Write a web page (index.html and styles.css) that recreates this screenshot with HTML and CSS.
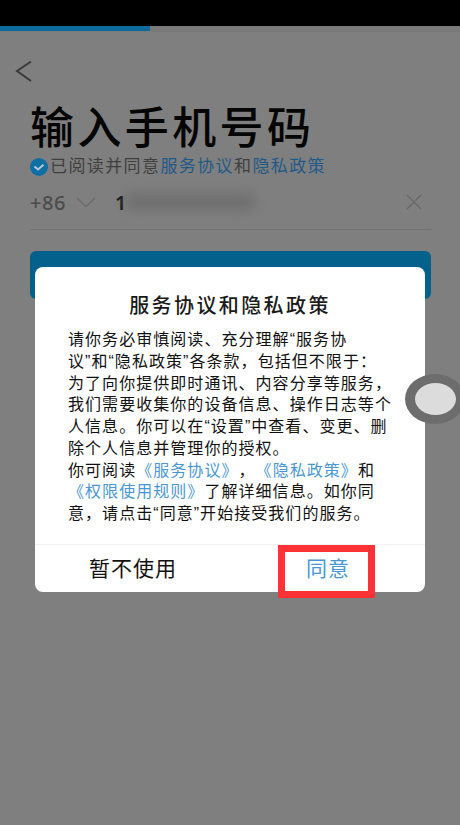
FILE: index.html
```html
<!DOCTYPE html>
<html lang="zh-CN">
<head>
<meta charset="utf-8">
<title>输入手机号码</title>
<link rel="stylesheet" href="styles.css">
</head>
<body>
<div class="statusbar"></div>
<div class="progress"><div class="progress-fill"></div></div>
<main class="screen">
  <svg class="back" width="18" height="24" viewBox="0 0 18 24"><path d="M16 2.500 L2 12 L16 22" fill="none" stroke="#3a3a3a" stroke-width="2"/></svg>
  <h1 class="title">输入手机号码</h1>
  <p class="agree">
    <svg class="check" width="18" height="18" viewBox="0 0 18 18"><circle cx="9" cy="9" r="9" fill="#0f6ea3"/><path d="M4.500 8.500 L8 11.500 L13.500 6.800" fill="none" stroke="#b9c9d3" stroke-width="2"/></svg>
    <span>已阅读并同意<a class="doc-link">服务协议</a>和<a class="doc-link">隐私政策</a></span>
  </p>
  <div class="phone-row">
    <span class="code">+86</span>
    <svg class="caret" width="20" height="11" viewBox="0 0 20 11"><path d="M1 1 L10 9.500 L19 1" fill="none" stroke="#6c6c6c" stroke-width="1.300"/></svg>
    <span class="number">1</span>
    <span class="blur"></span>
    <svg class="clear" width="18" height="16" viewBox="0 0 18 16"><path d="M2 1 L16 15 M16 1 L2 15" fill="none" stroke="#6a6a6a" stroke-width="1.500"/></svg>
  </div>
  <div class="next"></div>
</main>

<section class="dialog">
  <h2 class="dialog-title">服务协议和隐私政策</h2>
  <div class="dialog-body">
    <div>请你务必审慎阅读、充分理解“服务协</div>
    <div>议”和“隐私政策”各条款，包括但不限于：</div>
    <div>为了向你提供即时通讯、内容分享等服务，</div>
    <div>我们需要收集你的设备信息、操作日志等个</div>
    <div>人信息。你可以在“设置”中查看、变更、删</div>
    <div>除个人信息并管理你的授权。</div>
    <div>你可阅读<a class="rule-link">《服务协议》</a>，<a class="rule-link">《隐私政策》</a>和</div>
    <div><a class="rule-link">《权限使用规则》</a>了解详细信息。如你同</div>
    <div>意，请点击“同意”开始接受我们的服务。</div>
  </div>
  <div class="dialog-actions">
    <button class="action decline">暂不使用</button>
    <button class="action accept">同意</button>
  </div>
</section>

<div class="highlight"></div>
<div class="float-ball"><div class="float-inner"></div></div>
</body>
</html>
```
FILE: styles.css
```css
* { box-sizing: border-box; }
html, body { margin: 0; height: 100%; }
body {
  width: 460px;
  height: 825px;
  position: relative;
  overflow: hidden;
  background: #7f7f7f;
  font-family: "Liberation Sans", "Noto Sans CJK SC", sans-serif;
  text-spacing-trim: space-all;
}
.statusbar { height: 26px; background: #000; }
.progress { height: 6px; background: #7a7a7a; }
.progress-fill { width: 150px; height: 5px; background: #0c6a9c; }

.screen { padding: 27px 29px 0 30px; }
.back { display: block; margin: 0 0 22px -15px; }
.title {
  margin: 0;
  font-size: 44px;
  line-height: 48px;
  font-weight: 500;
  letter-spacing: 3.400px;
  color: #050505;
}
.agree {
  display: flex;
  align-items: center;
  gap: 2px;
  margin: 2px 0 0;
  font-size: 17px;
  line-height: 24px;
  letter-spacing: 1.400px;
  color: #3f3f3f;
  white-space: nowrap;
}
.doc-link { color: #1f5a88; }
.phone-row {
  display: flex;
  align-items: center;
  height: 50px;
  margin-top: 1px;
  padding-bottom: 5px;
  border-bottom: 1px solid #747474;
}
.code { font-family: "Noto Sans", sans-serif; font-size: 20px; font-weight: 500; color: #4c4c4c; width: 46px; letter-spacing: .5px; }
.caret { margin-right: 19px; }
.number { font-family: "Noto Sans", sans-serif; font-size: 20px; font-weight: 600; color: #111; width: 9px; }
.blur { width: 132px; height: 18px; background: #707070; border-radius: 9px; filter: blur(6px); }
.clear { margin-left: auto; margin-right: 8px; }
.next { height: 48px; margin-top: 21px; background: #03618b; border-radius: 6px; }

.dialog {
  position: absolute;
  left: 35px;
  top: 267px;
  width: 390px;
  height: 325px;
  background: #fff;
  border-radius: 8px;
  display: flex;
  flex-direction: column;
}
.dialog-title {
  margin: 25px 0 0;
  text-align: center;
  font-size: 20px;
  line-height: 28px;
  font-weight: 500;
  letter-spacing: 2.400px;
  color: #1a1a1a;
}
.dialog-body {
  margin: 9px 0 0 33px;
  font-size: 16px;
  line-height: 21.750px;
  letter-spacing: 1.050px;
  color: #111;
  white-space: nowrap;
}
.rule-link { color: #4a97d6; }
.dialog-actions {
  margin-top: auto;
  height: 48px;
  border-top: 1px solid #f2f2f2;
  display: flex;
  align-items: center;
}
.action {
  border: 0;
  background: none;
  padding: 0;
  font-family: inherit;
  font-size: 21px;
  letter-spacing: 1px;
  line-height: 28px;
}
.decline { color: #111; margin-left: 54px; }
.accept { color: #4a97d6; margin-left: 129px; }

.highlight {
  position: absolute;
  left: 278px;
  top: 545px;
  width: 97px;
  height: 53px;
  border: 7px solid #ff3336;
}
.float-ball {
  position: absolute;
  left: 405px;
  top: 374px;
  width: 60px;
  height: 50px;
  border-radius: 50%;
  background: #6d6d6d;
  display: flex;
  align-items: center;
  padding-left: 10px;
}
.float-inner { width: 41px; height: 32px; border-radius: 50%; background: #dcdcdc; }
```
